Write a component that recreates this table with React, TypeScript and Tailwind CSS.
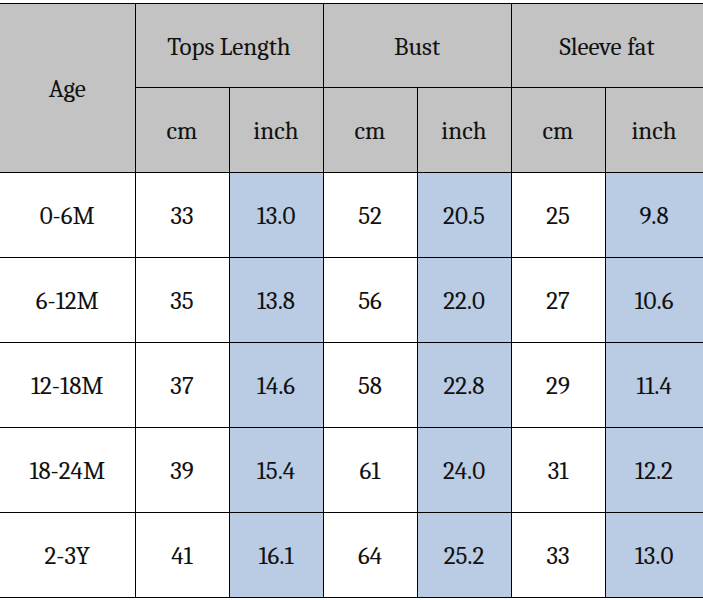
const rows = [
  ["0-6M", "33", "13.0", "52", "20.5", "25", "9.8"],
  ["6-12M", "35", "13.8", "56", "22.0", "27", "10.6"],
  ["12-18M", "37", "14.6", "58", "22.8", "29", "11.4"],
  ["18-24M", "39", "15.4", "61", "24.0", "31", "12.2"],
  ["2-3Y", "41", "16.1", "64", "25.2", "33", "13.0"],
];

const groups = ["Tops Length", "Bust", "Sleeve fat"];

export default function App() {
  return (
    <div className="w-[703px] h-[600px] bg-white pt-[3px] text-[25px] text-[#111] font-serif">
      <table className="w-[703px] table-fixed border-collapse text-center font-serif">
        <colgroup>
          <col className="w-[135px]" />
          <col className="w-[94px]" />
          <col className="w-[94px]" />
          <col className="w-[94px]" />
          <col className="w-[94px]" />
          <col className="w-[94px]" />
          <col className="w-[98px]" />
        </colgroup>
        <thead className="bg-[#c3c3c3]">
          <tr className="h-[84px]">
            <th rowSpan={2} className="border border-l-0 border-black font-normal pt-[2px]">
              Age
            </th>
            {groups.map((g) => (
              <th key={g} colSpan={2} className="border border-black font-normal pt-[2px]">
                {g}
              </th>
            ))}
          </tr>
          <tr className="h-[85px]">
            {groups.map((g) => (
              <>
                <th key={g + "cm"} className="border border-black font-normal pt-[2px]">
                  cm
                </th>
                <th key={g + "in"} className="border border-black font-normal pt-[2px]">
                  inch
                </th>
              </>
            ))}
          </tr>
        </thead>
        <tbody>
          {rows.map((r) => (
            <tr key={r[0]} className="h-[85px]">
              {r.map((v, i) => (
                <td
                  key={i}
                  className={
                    i === 0
                      ? "border border-l-0 border-black pt-[2px]"
                      : i % 2 === 0
                        ? "border border-black bg-[#b9cce4] pt-[2px]"
                        : "border border-black pt-[2px]"
                  }
                >
                  {v}
                </td>
              ))}
            </tr>
          ))}
        </tbody>
      </table>
    </div>
  );
}
